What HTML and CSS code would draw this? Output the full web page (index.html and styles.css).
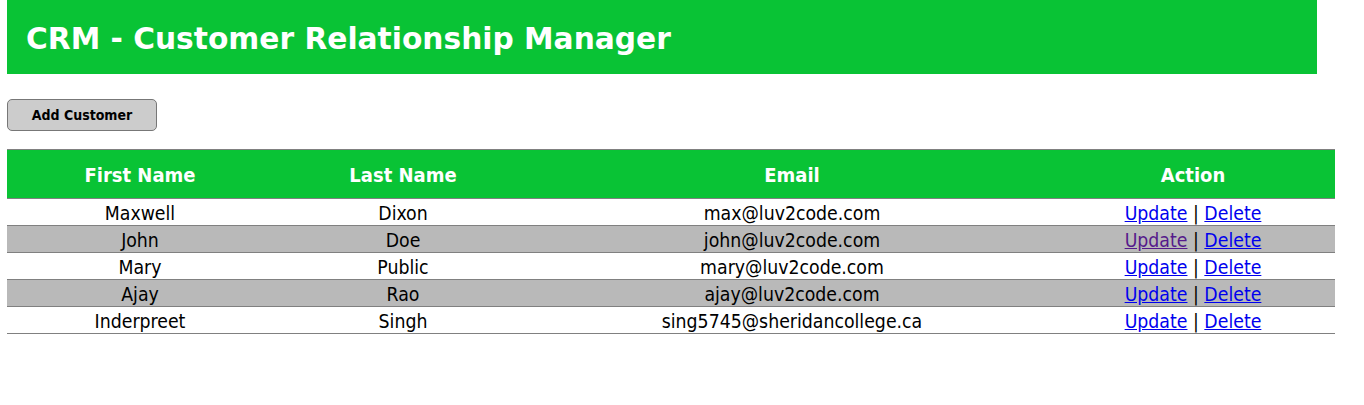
FILE: index.html
```html
<!DOCTYPE html>
<html>
<head>
<meta charset="utf-8">
<title>CRM</title>
<link rel="stylesheet" href="styles.css">
</head>
<body>
<div class="wrapper">
  <div class="header"><h2>CRM - Customer Relationship Manager</h2></div>
</div>
<div class="container">
  <div class="content">
    <button class="add-button">Add Customer</button>
    <table>
      <thead>
        <tr><th class="c1">First Name</th><th class="c2">Last Name</th><th class="c3">Email</th><th class="c4">Action</th></tr>
      </thead>
      <tbody>
        <tr><td>Maxwell</td><td>Dixon</td><td>max@luv2code.com</td><td><a href="#u1">Update</a> | <a href="#d1">Delete</a></td></tr>
        <tr><td>John</td><td>Doe</td><td>john@luv2code.com</td><td><a class="visited" href="#u2">Update</a> | <a href="#d2">Delete</a></td></tr>
        <tr><td>Mary</td><td>Public</td><td>mary@luv2code.com</td><td><a href="#u3">Update</a> | <a href="#d3">Delete</a></td></tr>
        <tr><td>Ajay</td><td>Rao</td><td>ajay@luv2code.com</td><td><a href="#u4">Update</a> | <a href="#d4">Delete</a></td></tr>
        <tr><td>Inderpreet</td><td>Singh</td><td>sing5745@sheridancollege.ca</td><td><a href="#u5">Update</a> | <a href="#d5">Delete</a></td></tr>
      </tbody>
    </table>
  </div>
</div>
</body>
</html>
```
FILE: styles.css
```css
html, body {
  margin: 0;
  padding: 0;
  background: #ffffff;
  font-family: "DejaVu Sans Condensed", "DejaVu Sans", sans-serif;
}

.wrapper {
  padding-left: 7px;
}

.header {
  width: 1310px;
  height: 74px;
  background: #09c335;
  display: flex;
  align-items: center;
  box-sizing: border-box;
  padding-left: 19px;
}

.header h2 {
  margin: 0;
  color: #ffffff;
  font-family: "DejaVu Sans", sans-serif;
  font-size: 29.7px;
  font-weight: bold;
  padding-top: 2px;
}

.container {
  padding-left: 7px;
  padding-top: 25px;
}

.add-button {
  display: block;
  width: 150px;
  height: 32px;
  background: #cccccc;
  border: 1px solid #777777;
  border-radius: 5px;
  font-family: "DejaVu Sans Condensed", "DejaVu Sans", sans-serif;
  font-weight: bold;
  font-size: 14px;
  color: #000000;
  padding: 0;
  margin-bottom: 18px;
}

table {
  border-collapse: collapse;
  width: 1328px;
  table-layout: fixed;
}

.c1 { width: 264px; }
.c2 { width: 258px; }
.c3 { width: 516px; }
.c4 { width: 282px; }

th {
  background: #09c335;
  color: #ffffff;
  font-size: 20px;
  font-weight: bold;
  padding: 13px 1px 11px;
  border-top: 1px solid #808080;
  border-bottom: 1px solid #808080;
  line-height: 24px;
}

td {
  text-align: center;
  font-size: 19.3px;
  padding: 3px 1px 0;
  line-height: 23px;
  border-bottom: 1px solid #808080;
  color: #000000;
}

tbody tr:nth-child(even) {
  background: #b9b9b9;
}

a {
  color: #0000ee;
  text-decoration: underline;
}

a.visited {
  color: #551a8b;
}
```
